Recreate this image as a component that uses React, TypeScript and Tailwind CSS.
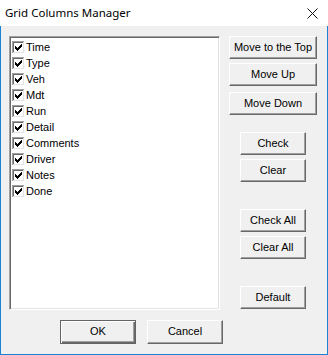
import React from "react";

const items = ["Time", "Type", "Veh", "Mdt", "Run", "Detail", "Comments", "Driver", "Notes", "Done"];

const checkPixels: [number, number][] = [
  [6, 0],
  [5, 1], [6, 1],
  [0, 2], [4, 2], [5, 2], [6, 2],
  [0, 3], [1, 3], [3, 3], [4, 3], [5, 3],
  [0, 4], [1, 4], [2, 4], [3, 4], [4, 4],
  [1, 5], [2, 5], [3, 5],
  [2, 6],
];

function CheckBox() {
  return (
    <svg width="13" height="13" viewBox="0 0 13 13" shapeRendering="crispEdges" className="shrink-0">
      <rect x="0" y="0" width="13" height="13" fill="#ffffff" />
      <rect x="0" y="0" width="12" height="1" fill="#a0a0a0" />
      <rect x="0" y="0" width="1" height="12" fill="#a0a0a0" />
      <rect x="1" y="1" width="10" height="1" fill="#696969" />
      <rect x="1" y="1" width="1" height="10" fill="#696969" />
      <rect x="1" y="11" width="11" height="1" fill="#e3e3e3" />
      <rect x="11" y="1" width="1" height="11" fill="#e3e3e3" />
      {checkPixels.map(([x, y], i) => (
        <rect key={i} x={3 + x} y={3 + y} width="1" height="1" fill="#000000" />
      ))}
    </svg>
  );
}

function Btn({ label, className = "" }: { label: string; className?: string }) {
  return (
    <div
      className={
        "flex items-center justify-center bg-[#f0f0f0] border border-t-white border-l-white border-r-[#696969] border-b-[#696969] shadow-[inset_-1px_-1px_0_#a0a0a0] text-[11px] text-black leading-none " +
        className
      }
    >
      <span className="pb-px">{label}</span>
    </div>
  );
}

export default function App() {
  return (
    <div
      className="w-[328px] h-[355px] flex flex-col bg-white overflow-hidden"
      style={{ fontFamily: '"Liberation Sans", Arial, sans-serif' }}
    >
      <div className="h-[26px] flex items-center justify-between pl-[5px] pr-[10px] bg-white">
        <span
          className="text-[11.5px] text-black"
          style={{ fontFamily: '"Noto Sans", "Liberation Sans", sans-serif' }}
        >
          Grid Columns Manager
        </span>
        <svg width="11" height="11" viewBox="0 0 11 11" className="mt-[1px]">
          <path d="M0.5 0.5 L10.5 10.5 M10.5 0.5 L0.5 10.5" stroke="#111" strokeWidth="1" />
        </svg>
      </div>
      <div className="flex-1 flex flex-col bg-[#f0f0f0] border-x border-b border-[#1883d7] pt-[10px] pl-[8px]">
        <div className="flex">
          <div className="w-[211px] h-[274px] bg-white border border-t-[#a0a0a0] border-l-[#a0a0a0] border-r-white border-b-white shadow-[inset_1px_1px_0_#696969,inset_-1px_-1px_0_#e3e3e3] pt-[2px] pl-[2px]">
            {items.map((it) => (
              <div key={it} className="h-[16px] flex items-center">
                <CheckBox />
                <span className="ml-px text-[11px] text-black leading-none">{it}</span>
              </div>
            ))}
          </div>
          <div className="ml-[9px] w-[88px] flex flex-col items-center">
            <Btn label="Move to the Top" className="w-[88px] h-[23px]" />
            <Btn label="Move Up" className="w-[88px] h-[23px] mt-[4px]" />
            <Btn label="Move Down" className="w-[88px] h-[23px] mt-[6px]" />
            <Btn label="Check" className="w-[66px] h-[23px] mt-[17px]" />
            <Btn label="Clear" className="w-[66px] h-[23px] mt-[4px]" />
            <Btn label="Check All" className="w-[66px] h-[23px] mt-[27px]" />
            <Btn label="Clear All" className="w-[66px] h-[23px] mt-[4px]" />
            <Btn label="Default" className="w-[66px] h-[23px] mt-[27px]" />
          </div>
        </div>
        <div className="flex mt-[10px] pl-[51px]">
          <div className="w-[76px] h-[24px] flex items-center justify-center bg-[#f0f0f0] border border-[#646464] shadow-[inset_1px_1px_0_#ffffff,inset_-1px_-1px_0_#696969,inset_-2px_-2px_0_#a0a0a0] text-[11px] text-black leading-none">
            <span className="pb-px">OK</span>
          </div>
          <Btn label="Cancel" className="w-[76px] h-[24px] ml-[11px]" />
        </div>
      </div>
    </div>
  );
}
